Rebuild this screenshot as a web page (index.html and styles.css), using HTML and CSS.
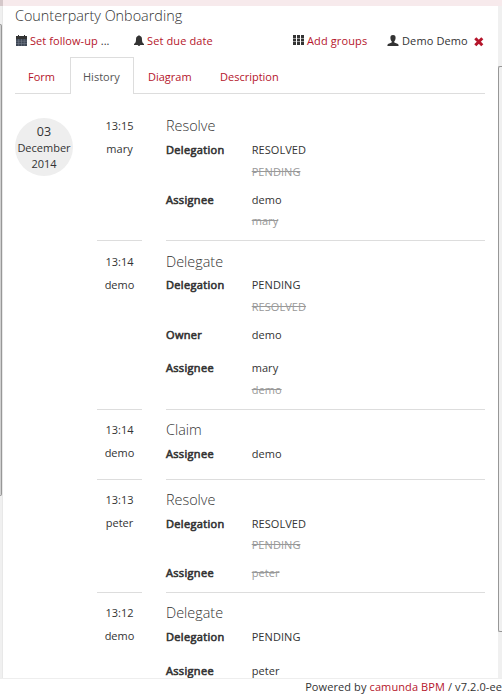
FILE: index.html
```
<!DOCTYPE html>
<html lang="en">
<head>
<meta charset="utf-8">
<title>Counterparty Onboarding</title>
<link rel="stylesheet" href="styles.css">
</head>
<body>
<div class="topbar"></div>
<div class="main">
  <div class="scroll scroll-left"><div class="thumb"></div></div>
  <main class="task">
    <h1>Counterparty Onboarding</h1>
    <div class="meta">
      <span class="item follow"><svg class="icon" width="11" height="12" viewBox="0 0 11 12"><path fill="#333" d="M0 1h2V0h1v1h5V0h1v1h2v3H0z"/><path fill="#3d4654" d="M0 4h11v7H0z"/><path stroke="#7b8390" stroke-width=".5" d="M0 6.2h11M0 8.5h11M2.7 4v7M5.5 4v7M8.2 4v7"/></svg><a>Set follow-up <i>...</i></a></span>
      <span class="item due"><svg class="icon" width="10" height="12" viewBox="0 0 10 12"><path fill="#333" d="M4.2.8Q5-.4 5.8.8C7.8 1.5 8 3 8 5c0 2 .7 3 2 4v1H0V9c1.300-1 2-2 2-4 0-2 .2-3.500 2.200-4.200zM3.700 10h2.600q-1.300 2-2.600 0z"/></svg><a>Set due date</a></span>
      <span class="item groups"><svg class="icon" width="11" height="11" viewBox="0 0 11 11"><path fill="#333" d="M0 0h3v3H0zM4 0h3v3H4zM8 0h3v3H8zM0 3.500h3v3H0zM4 3.500h3v3H4zM8 3.500h3v3H8zM0 7h3v3H0zM4 7h3v3H4zM8 7h3v3H8z"/></svg><a>Add groups</a></span>
      <span class="item user"><svg class="icon" width="12" height="12" viewBox="0 0 12 12"><path fill="#333" d="M6 0C8 0 8.700 1.300 8.600 3 8.500 4.700 8 5.500 7.300 6.300v1.200L11 9q.6.500.6 2H.4Q.4 9.500 1 9l3.700-1.500V6.300C4 5.500 3.500 4.700 3.400 3 3.300 1.300 4 0 6 0z"/></svg>Demo Demo<svg class="remove" width="10" height="10" viewBox="0 0 10 10"><path stroke="#b5152b" stroke-width="3" d="M1.300 1.300l7 7M8.300 1.300l-7 7"/></svg></span>
    </div>
    <nav class="tabs"><a class="form">Form</a><a class="active">History</a><a class="diagram">Diagram</a><a class="description">Description</a></nav>
    <div class="history">
      <div class="date"><span class="day">03</span><span>December</span><span>2014</span></div>
      <div class="events">
        <section class="event">
          <div class="when"><span>13:15</span><span>mary</span></div>
          <div class="what"><h2>Resolve</h2>
            <dl><dt>Delegation</dt><dd><span class="new">RESOLVED</span><del>PENDING</del></dd></dl>
            <dl><dt>Assignee</dt><dd><span class="new">demo</span><del>mary</del></dd></dl>
          </div>
        </section>
        <section class="event">
          <div class="when"><span>13:14</span><span>demo</span></div>
          <div class="what"><h2>Delegate</h2>
            <dl><dt>Delegation</dt><dd><span class="new">PENDING</span><del>RESOLVED</del></dd></dl>
            <dl><dt>Owner</dt><dd><span class="new">demo</span></dd></dl>
            <dl><dt>Assignee</dt><dd><span class="new">mary</span><del>demo</del></dd></dl>
          </div>
        </section>
        <section class="event">
          <div class="when"><span>13:14</span><span>demo</span></div>
          <div class="what"><h2>Claim</h2>
            <dl><dt>Assignee</dt><dd><span class="new">demo</span></dd></dl>
          </div>
        </section>
        <section class="event">
          <div class="when"><span>13:13</span><span>peter</span></div>
          <div class="what"><h2>Resolve</h2>
            <dl><dt>Delegation</dt><dd><span class="new">RESOLVED</span><del>PENDING</del></dd></dl>
            <dl><dt>Assignee</dt><dd><del>peter</del></dd></dl>
          </div>
        </section>
        <section class="event">
          <div class="when"><span>13:12</span><span>demo</span></div>
          <div class="what"><h2>Delegate</h2>
            <dl><dt>Delegation</dt><dd><span class="new">PENDING</span></dd></dl>
            <dl><dt>Assignee</dt><dd><span class="new">peter</span></dd></dl>
          </div>
        </section>
      </div>
    </div>
  </main>
  <div class="scroll scroll-right"><div class="thumb"></div></div>
</div>
<footer>Powered by <a>camunda BPM</a> / v7.2.0-ee</footer>
</body>
</html>
```
FILE: styles.css
```
* { box-sizing: border-box; }
body {
  margin: 0;
  width: 502px;
  height: 698px;
  overflow: hidden;
  display: flex;
  flex-direction: column;
  background: #fff;
  color: #333;
  font: 11px/16px "Open Sans", sans-serif;
}
a { color: #b5152b; }
h1, h2, dl, dd { margin: 0; }
.topbar { height: 6px; flex: none; background: #f7eaec; border-left: 3px solid #d5c8ca; }
.main { height: 672px; flex: none; display: flex; overflow: hidden; }
.scroll { flex: none; background: #f0f0f0; }
.scroll-left { width: 3px; border-right: 1px solid #e8e8e8; padding-top: 18px; }
.scroll-left .thumb { height: 472px; background: #d0d0d0; border: 1px solid #979797; border-left: 0; border-radius: 0 2px 2px 0; }
.scroll-right { width: 4px; padding-top: 60px; }
.scroll-right .thumb { height: 566px; background: #f0f0f0; border: 1px solid #979797; border-right: 0; border-radius: 2px 0 0 2px; }
.task { flex: 1; min-width: 0; padding: 0 13px 0 12px; }
h1 { height: 25px; font-size: 14.4px; line-height: 20px; font-weight: 300; white-space: nowrap; }
.meta { display: flex; height: 20px; padding-top: 2px; white-space: nowrap; }
.item { display: flex; }
.item i { font-style: normal; color: #333; }
.icon { flex: none; margin: 2px 3px 0 0; }
.follow { width: 119px; padding-left: 1px; letter-spacing: .06px; }
.due { width: 159px; letter-spacing: .12px; }
.groups { width: 94px; letter-spacing: .12px; }
.user { letter-spacing: .12px; }
.remove { margin: 4px 0 0 6px; }
.tabs { display: flex; height: 40px; margin-top: 3px; padding-top: 3px; border-bottom: 1px solid #ddd; }
.tabs a { height: 36px; padding: 12px 0 0 13px; }
.tabs .form { width: 55px; }
.tabs .active { width: 64px; height: 37px; padding: 11px 0 0 12px; color: #555; background: #fff; border: 1px solid #ddd; border-bottom: 0; }
.tabs .diagram { width: 73px; padding-left: 14px; }
.history { display: flex; gap: 24px; padding-top: 12px; }
.date { flex: none; width: 58px; height: 58px; margin-top: 12px; padding-top: 6px; border-radius: 50%; background: #eee; display: flex; flex-direction: column; align-items: center; }
.date .day { font-size: 12.5px; }
.events { flex: 1; }
.event { display: flex; gap: 24px; }
.when { width: 45px; padding-top: 12.4px; display: flex; flex-direction: column; align-items: center; gap: 7px; border-bottom: 1px solid #ddd; }
.what { flex: 1; padding: 9.4px 0 11px; border-bottom: 1px solid #ddd; }
h2 { height: 26.6px; font-size: 14.4px; line-height: 22px; font-weight: 300; }
dl { display: grid; grid-template-columns: 85.7px 1fr; }
dl + dl { margin-top: 12px; }
dt { font-weight: 400; letter-spacing: .33px; -webkit-text-stroke: .6px #333; }
.new { display: block; margin-bottom: 5.6px; }
.new, del { letter-spacing: .06px; }
del { display: block; color: #999; }
footer { height: 20px; border-top: 1px solid #eee; text-align: right; white-space: nowrap; letter-spacing: .1px; }
```
